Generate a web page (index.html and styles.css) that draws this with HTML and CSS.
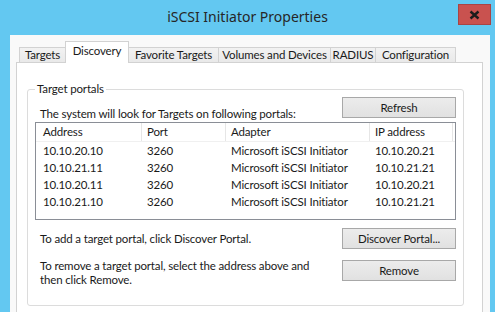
FILE: index.html
```html
<!DOCTYPE html>
<html lang="en">
<head>
    <meta charset="UTF-8">
    <title>iSCSI Initiator Properties</title>
    <link rel="stylesheet" href="styles.css">
</head>
<body>
    <div class="window">
        <div class="titlebar">
            <span></span>
            <h1 class="title">iSCSI Initiator Properties</h1>
            <button class="close" title="Close">
                <svg width="11" height="10" viewBox="0 0 11 10">
                    <path d="M1.5 1.5 L9.5 8.5 M9.5 1.5 L1.5 8.5" stroke="#1c1c1c" stroke-width="2.4" fill="none"/>
                </svg>
            </button>
        </div>

        <div class="dialog">
            <div class="tabs">
                <div class="tab tab-targets">Targets</div>
                <div class="tab tab-discovery active">Discovery</div>
                <div class="tab tab-favorites">Favorite Targets</div>
                <div class="tab tab-volumes">Volumes and Devices</div>
                <div class="tab tab-radius">RADIUS</div>
                <div class="tab tab-config">Configuration</div>
            </div>

            <div class="tab-panel">
                <fieldset class="group">
                    <legend>Target portals</legend>

                    <div class="row row-top">
                        <p>The system will look for Targets on following portals:</p>
                        <button class="btn">Refresh</button>
                    </div>

                    <div class="list">
                        <div class="list-row list-head">
                            <span>Address</span>
                            <span>Port</span>
                            <span>Adapter</span>
                            <span>IP address</span>
                            <span></span>
                        </div>
                        <div class="list-row">
                            <span>10.10.20.10</span><span>3260</span><span>Microsoft iSCSI Initiator</span><span>10.10.20.21</span><span></span>
                        </div>
                        <div class="list-row">
                            <span>10.10.21.11</span><span>3260</span><span>Microsoft iSCSI Initiator</span><span>10.10.21.21</span><span></span>
                        </div>
                        <div class="list-row">
                            <span>10.10.20.11</span><span>3260</span><span>Microsoft iSCSI Initiator</span><span>10.10.20.21</span><span></span>
                        </div>
                        <div class="list-row">
                            <span>10.10.21.10</span><span>3260</span><span>Microsoft iSCSI Initiator</span><span>10.10.21.21</span><span></span>
                        </div>
                    </div>

                    <div class="row row-add">
                        <p>To add a target portal, click Discover Portal.</p>
                        <button class="btn">Discover Portal...</button>
                    </div>

                    <div class="row row-remove">
                        <p>To remove a target portal, select the address above and<br>then click Remove.</p>
                        <button class="btn">Remove</button>
                    </div>
                </fieldset>
            </div>
        </div>
    </div>
</body>
</html>
```

FILE: styles.css
```css
:root {
    --frame: #63c8f1;
    --text: #1a1a1a;
    --tab-border: #d2d2d2;
    --group-border: #dcdcdc;
    --list-border: #8a8e96;
    --divider: #e6e6e6;
}

* {
    box-sizing: border-box;
}

body {
    margin: 0;
    background: #fff;
    color: var(--text);
    font-family: Lato, 'Segoe UI', Arial, sans-serif;
    font-size: 11.5px;
    letter-spacing: -0.15px;
}

.window {
    width: 495px;
    height: 312px;
    background: var(--frame);
    display: flex;
    flex-direction: column;
}

/* title bar */
.titlebar {
    height: 35px;
    display: grid;
    grid-template-columns: 1fr auto 1fr;
    align-items: start;
}

.title {
    margin: 0;
    padding-top: 7px;
    font-family: 'Noto Sans', 'Segoe UI', Arial, sans-serif;
    font-size: 14px;
    line-height: 20px;
    font-weight: normal;
    letter-spacing: 0;
    color: #262626;
}

.close {
    justify-self: end;
    margin: 4px 4px 0 0;
    width: 33px;
    height: 21px;
    padding: 0;
    border: 1px solid #a94444;
    background: #c9524f;
    display: flex;
    align-items: center;
    justify-content: center;
}

/* dialog body */
.dialog {
    flex: 1;
    margin: 0 5px 0 10px;
    padding: 6px 7px 0 6px;
    background: #f9f9f9;
    display: flex;
    flex-direction: column;
}

.tabs {
    display: flex;
    align-items: flex-end;
    height: 22px;
    padding-left: 3px;
    margin-bottom: -1px;
    position: relative;
    z-index: 1;
}

.tab {
    height: 15px;
    margin-bottom: 1px;
    margin-right: -1px;
    border: 1px solid var(--tab-border);
    border-bottom: none;
    background: linear-gradient(#f2f2f2, #e9e9e9);
    text-align: center;
    line-height: 14px;
    white-space: nowrap;
}

.tab.active {
    height: 22px;
    margin-bottom: 0;
    background: #fff;
    line-height: 18px;
    position: relative;
    z-index: 1;
}

.tab-targets { width: 47px; }
.tab-discovery { width: 64px; }
.tab-favorites { width: 91px; }
.tab-volumes { width: 113px; }
.tab-radius { width: 46px; }
.tab-config { width: 81px; }

.tab-panel {
    flex: 1;
    background: #fff;
    border: 1px solid var(--tab-border);
    border-bottom: none;
    padding: 19px 18px 6px 10px;
    display: flex;
    flex-direction: column;
}

/* group box */
.group {
    flex: 1;
    margin: 0;
    min-width: 0;
    padding: 1px 7px 0 7px;
    border: 1px solid var(--group-border);
    border-radius: 3px;
}

.group legend {
    padding: 0 2px;
    line-height: 14px;
}

.row {
    display: flex;
    justify-content: space-between;
}

.row p {
    margin: 0 0 0 5px;
    line-height: 14px;
}

.row-top {
    align-items: flex-end;
}

.row-top .btn {
    margin-bottom: 3px;
}

.row-add {
    margin-top: 8px;
    align-items: center;
}

.row-remove {
    margin-top: 11px;
    align-items: flex-start;
}

.row-remove p {
    margin-top: -1px;
}

.btn {
    width: 114px;
    height: 21px;
    padding: 0;
    border: 1px solid #a8a8a8;
    background: linear-gradient(#ececec, #e1e1e1);
    font-family: inherit;
    font-size: inherit;
    letter-spacing: inherit;
    color: var(--text);
    flex-shrink: 0;
}

/* list view */
.list {
    margin-top: 1px;
    height: 98px;
    border: 1px solid var(--list-border);
    background: #fff;
}

.list-row {
    display: grid;
    grid-template-columns: 106px 84px 144px 83px 1fr;
    height: 17px;
    line-height: 17px;
    white-space: nowrap;
}

.list-row span {
    padding-left: 5px;
}

.list-row span:first-child {
    padding-left: 7px;
}

.list-head {
    height: 19px;
    line-height: 18px;
    border-bottom: 1px solid #f0f0f0;
}

.list-head span {
    border-right: 1px solid var(--divider);
}

.list-head span:last-child {
    border-right: none;
}
```
